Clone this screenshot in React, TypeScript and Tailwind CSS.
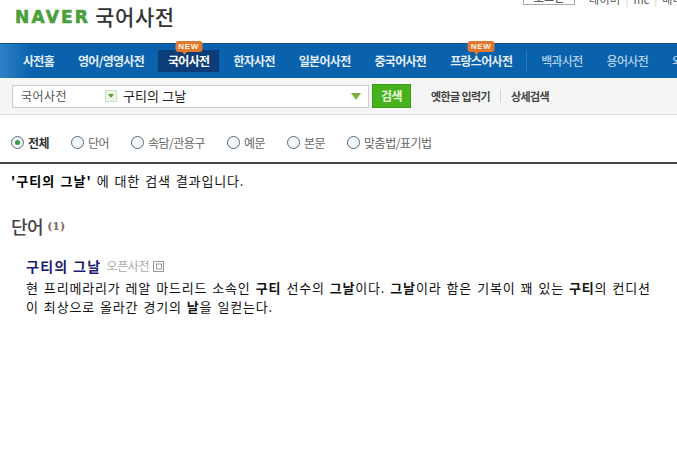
const navMain = ["사전홈", "영어/영영사전", "국어사전", "한자사전", "일본어사전", "중국어사전", "프랑스어사전"];
const navSub = ["백과사전", "용어사전", "외국어사전"];
const radios = ["전체", "단어", "속담/관용구", "예문", "본문", "맞춤법/표기법"];

function NewBadge() {
  return (
    <span className="absolute left-1/2 top-[-9px] flex h-[11px] w-[27px] -translate-x-1/2 items-center justify-center rounded-[3px] bg-[#e0782f] text-[8px] leading-none font-bold tracking-[0.7px] text-[#fff3e0] font-['Liberation_Sans',sans-serif]">
      NEW
      <span className="absolute left-[6px] top-[10px] h-0 w-0 border-x-[3px] border-t-[4px] border-x-transparent border-t-[#e0782f]" />
    </span>
  );
}

function Radio({ label, on }: { label: string; on: boolean }) {
  return (
    <div className="flex items-center gap-[4px]">
      <span className="flex h-[13px] w-[13px] items-center justify-center rounded-full border border-[#53697c] bg-[#f4f7f9]">
        {on && <span className="h-[5px] w-[5px] rounded-full bg-[#3f9a48]" />}
      </span>
      <span className={on ? "text-[12px] font-bold tracking-[-0.6px] text-[#333]" : "text-[12px] tracking-[-0.5px] text-[#666]"}>{label}</span>
    </div>
  );
}

export default function App() {
  return (
    <div className="h-[455px] w-[677px] overflow-hidden bg-white font-['Noto_Sans_CJK_KR',sans-serif]">
      <header className="flex h-[43px] items-start overflow-hidden">
        <div className="ml-[15px] mt-[4px] flex items-center gap-[5px]">
          <span className="mt-[2px] text-[17px] leading-[22px] font-bold tracking-[2.2px] text-[#4a9f3c] font-['DejaVu_Sans',sans-serif] [-webkit-text-stroke:0.6px_#4a9f3c]">NAVER</span>
          <span className="text-[21px] leading-[22px] font-medium tracking-[0.6px] text-[#333]">국어사전</span>
        </div>
        <div className="ml-auto mt-[-16px] flex h-[21px] w-[154px] shrink-0 items-end whitespace-nowrap text-[11px] leading-[11px]">
          <span className="flex h-[21px] w-[52px] shrink-0 items-end justify-center border border-[#aaa] pb-[1px] text-[#333]">로그인</span>
          <span className="ml-[14px] tracking-[0.4px] text-[#555]">테이머</span>
          <span className="mx-[5px] text-[#ccc]">|</span>
          <span className="text-[#555]">mc</span>
          <span className="mx-[5px] text-[#ccc]">|</span>
          <span className="text-[#555]">배너</span>
        </div>
      </header>

      <nav className="flex h-[35px] items-center gap-[4px] border-t border-[#0b4f8c] bg-[linear-gradient(90deg,#2f82c4_0,#0a62ad_32px)] pl-[13px] text-[12px] font-bold tracking-[-0.7px] whitespace-nowrap">
        {navMain.map((t) => {
          const active = t === "국어사전";
          const badge = active || t === "프랑스어사전";
          return (
            <a key={t} className={active ? "relative flex h-[22px] shrink-0 items-center bg-[#0c3d78] px-[10px] text-white" : "relative flex h-[22px] shrink-0 items-center px-[10px] text-[#e4eef7]"}>
              {t}
              {badge && <NewBadge />}
            </a>
          );
        })}
        <span className="h-[22px] w-px shrink-0 bg-[#2a78bb]" />
        {navSub.map((t) => (
          <a key={t} className="flex h-[22px] shrink-0 items-center px-[10px] font-medium text-[#b3d0ea]">{t}</a>
        ))}
      </nav>

      <div className="flex h-[37px] items-center border-b border-[#ddd] bg-[#f5f5f5] pl-[12px]">
        <div className="flex h-[23px] w-[357px] items-center border border-[#ccc] bg-white">
          <span className="ml-[8px] w-[84px] text-[12px] tracking-[0.5px] text-[#555]">국어사전</span>
          <span className="flex h-[12px] w-[12px] items-center justify-center border border-[#cde0c4] bg-[#eef6e8]">
            <svg width="6" height="4" viewBox="0 0 6 4"><path d="M0 0h6L3 4z" fill="#5aa032" /></svg>
          </span>
          <span className="ml-[6px] text-[13px] tracking-[0.1px] text-[#222]">구티의 그날</span>
          <svg className="ml-auto mr-[7px]" width="10" height="7" viewBox="0 0 10 7"><path d="M0 0h10L5 7z" fill="#7fb23a" /></svg>
        </div>
        <button className="ml-[3px] flex h-[24px] w-[39px] items-center justify-center border border-[#3b9d17] bg-[#47b31c] text-[12px] font-bold tracking-[-0.6px] text-[#e9f8df]">검색</button>
        <span className="ml-[20px] text-[11px] font-bold tracking-[-0.6px] text-[#444]">옛한글 입력기</span>
        <span className="mx-[10px] h-[12px] w-px bg-[#d5d5d5]" />
        <span className="text-[11px] font-bold tracking-[-0.6px] text-[#444]">상세검색</span>
      </div>

      <div className="flex h-[49px] items-center gap-[22px] border-b-2 border-[#444] pl-[11px] pt-[8px]">
        {radios.map((r, i) => (
          <Radio key={r} label={r} on={i === 0} />
        ))}
      </div>

      <p className="ml-[11px] mt-[7px] text-[13px] leading-[19px] tracking-[0.8px] [word-spacing:1.4px] text-[#111]">
        <b className="tracking-[1px] text-black">'구티의 그날'</b> 에 대한 검색 결과입니다.
      </p>

      <div className="ml-[11px] mt-[23px] flex items-center gap-[4px]">
        <h2 className="text-[18px] leading-[26px] font-medium tracking-[-0.5px] text-[#444]">단어</h2>
        <span className="mt-[2px] text-[11px] font-bold text-[#7d6b6b] font-['DejaVu_Serif',serif]">(1)</span>
      </div>

      <div className="ml-[26px] mt-[17px]">
        <div className="flex h-[20px] items-center">
          <a className="text-[14px] font-bold tracking-[1.3px] text-[#1b1b73]">구티의 그날</a>
          <span className="ml-[5px] text-[12px] tracking-[-0.3px] text-[#aaa]">오픈사전</span>
          <svg className="ml-[4px]" width="11" height="11" viewBox="0 0 11 11" fill="none" stroke="#999"><rect x="0.5" y="0.5" width="10" height="10" /><rect x="3.500" y="3" width="5" height="5" /></svg>
        </div>
        <p className="mt-[2px] w-[640px] text-[13px] leading-[19px] tracking-[0.8px] [word-spacing:1.4px] whitespace-nowrap text-[#111]">
          현 프리메라리가 레알 마드리드 소속인 <b>구티</b> 선수의 <b>그날</b>이다. <b>그날</b>이라 함은 기복이 꽤 있는 <b>구티</b>의 컨디션
          <br />
          이 최상으로 올라간 경기의 <b>날</b>을 일컫는다.
        </p>
      </div>
    </div>
  );
}
